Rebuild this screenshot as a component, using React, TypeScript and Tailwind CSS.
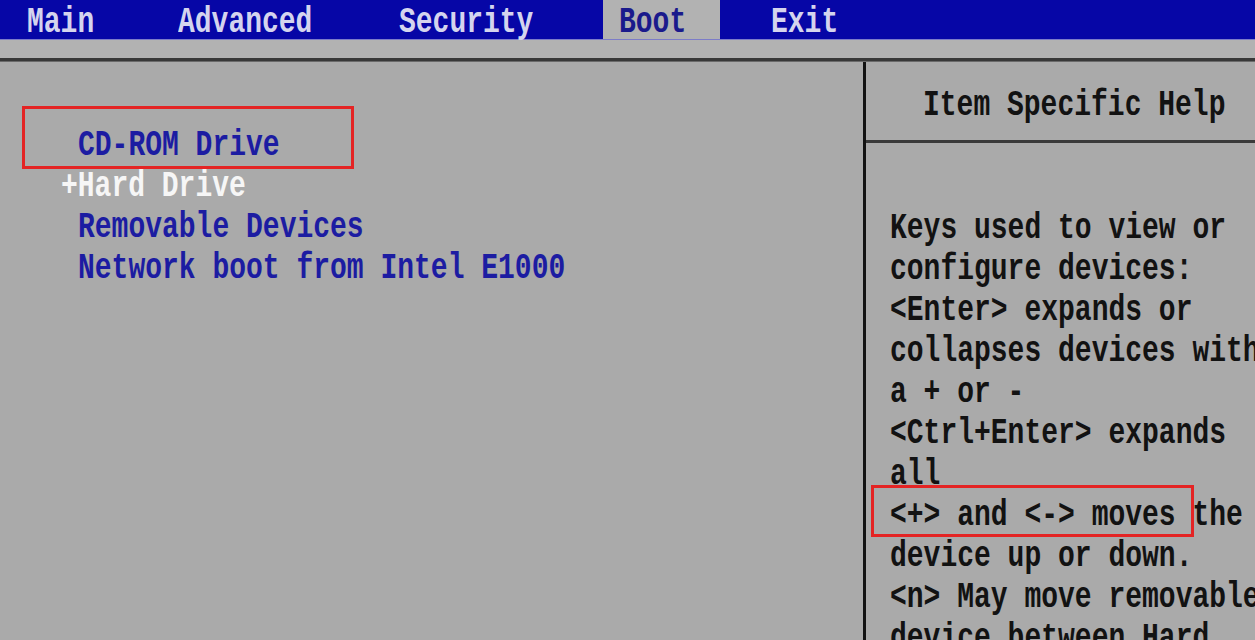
import React from "react";

const Line = ({ children, className = "" }: { children: React.ReactNode; className?: string }) => (
  <div className={`h-[41px] pt-[8px] flex items-center whitespace-pre ${className}`}>
    <span className="inline-block scale-y-[1.35] origin-center">{children}</span>
  </div>
);

export default function App() {
  const help = [
    "Keys used to view or",
    "configure devices:",
    "<Enter> expands or",
    "collapses devices with",
    "a + or -",
    "<Ctrl+Enter> expands",
    "all",
    "<+> and <-> moves the",
    "device up or down.",
    "<n> May move removable",
    "device between Hard",
  ];
  return (
    <div className="w-[1255px] h-[640px] overflow-hidden bg-[#aaaaaa] flex flex-col font-['Liberation_Mono',monospace] font-bold text-[28px] leading-none">
      {/* Tab bar */}
      <div className="h-[40px] bg-[#0606a6] flex items-stretch border-b border-[#7c7cc8] shrink-0">
        <div className="w-[178px] pl-[27px] pt-[6px] flex items-center text-[#d4d4ee]">
          <span className="inline-block scale-y-[1.35]">Main</span>
        </div>
        <div className="w-[221px] pt-[6px] flex items-center text-[#d4d4ee]">
          <span className="inline-block scale-y-[1.35]">Advanced</span>
        </div>
        <div className="w-[204px] pt-[6px] flex items-center text-[#d4d4ee]">
          <span className="inline-block scale-y-[1.35]">Security</span>
        </div>
        <div className="w-[117px] pl-[16px] pt-[6px] flex items-center bg-[#b2b2b2] text-[#1a1a8c]">
          <span className="inline-block scale-y-[1.35]">Boot</span>
        </div>
        <div className="pl-[51px] pt-[6px] flex items-center text-[#d4d4ee]">
          <span className="inline-block scale-y-[1.35]">Exit</span>
        </div>
      </div>
      {/* strip */}
      <div className="h-[18px] bg-[#b2b2b2] shrink-0" />
      <div className="h-[4px] bg-[#383838] border-b border-[#6a6a6a] shrink-0" />
      {/* body */}
      <div className="flex flex-1 min-h-0">
        <div className="w-[863px] pt-[59px] shrink-0">
          <div className="relative pl-[78px] text-[#1c1ca2]">
            <Line>CD-ROM Drive</Line>
            <div className="absolute left-[22px] top-[-15px] w-[332px] h-[63px] border-[3px] border-[#e42424]" />
          </div>
          <Line className="pl-[61px] text-[#f6f6f6]">+Hard Drive</Line>
          <Line className="pl-[78px] text-[#1c1ca2]">Removable Devices</Line>
          <Line className="pl-[78px] text-[#1c1ca2]">Network boot from Intel E1000</Line>
        </div>
        <div className="w-[3px] bg-[#121212] shrink-0" />
        <div className="flex-1 flex flex-col min-w-0 overflow-hidden text-[#121212]">
          <div className="h-[78px] pl-[57px] pt-[10px] flex items-center shrink-0">
            <span className="inline-block scale-y-[1.35] whitespace-pre">Item Specific Help</span>
          </div>
          <div className="h-[3px] bg-[#3a3a3a] shrink-0" />
          <div className="pt-[61px] pl-[24px]">
            {help.map((t, i) => (
              <div key={i} className="relative">
                <Line>{t}</Line>
                {i === 7 && (
                  <div className="absolute left-[-19px] top-[-6px] w-[323px] h-[52px] border-[3px] border-[#e42424]" />
                )}
              </div>
            ))}
          </div>
        </div>
      </div>
    </div>
  );
}
